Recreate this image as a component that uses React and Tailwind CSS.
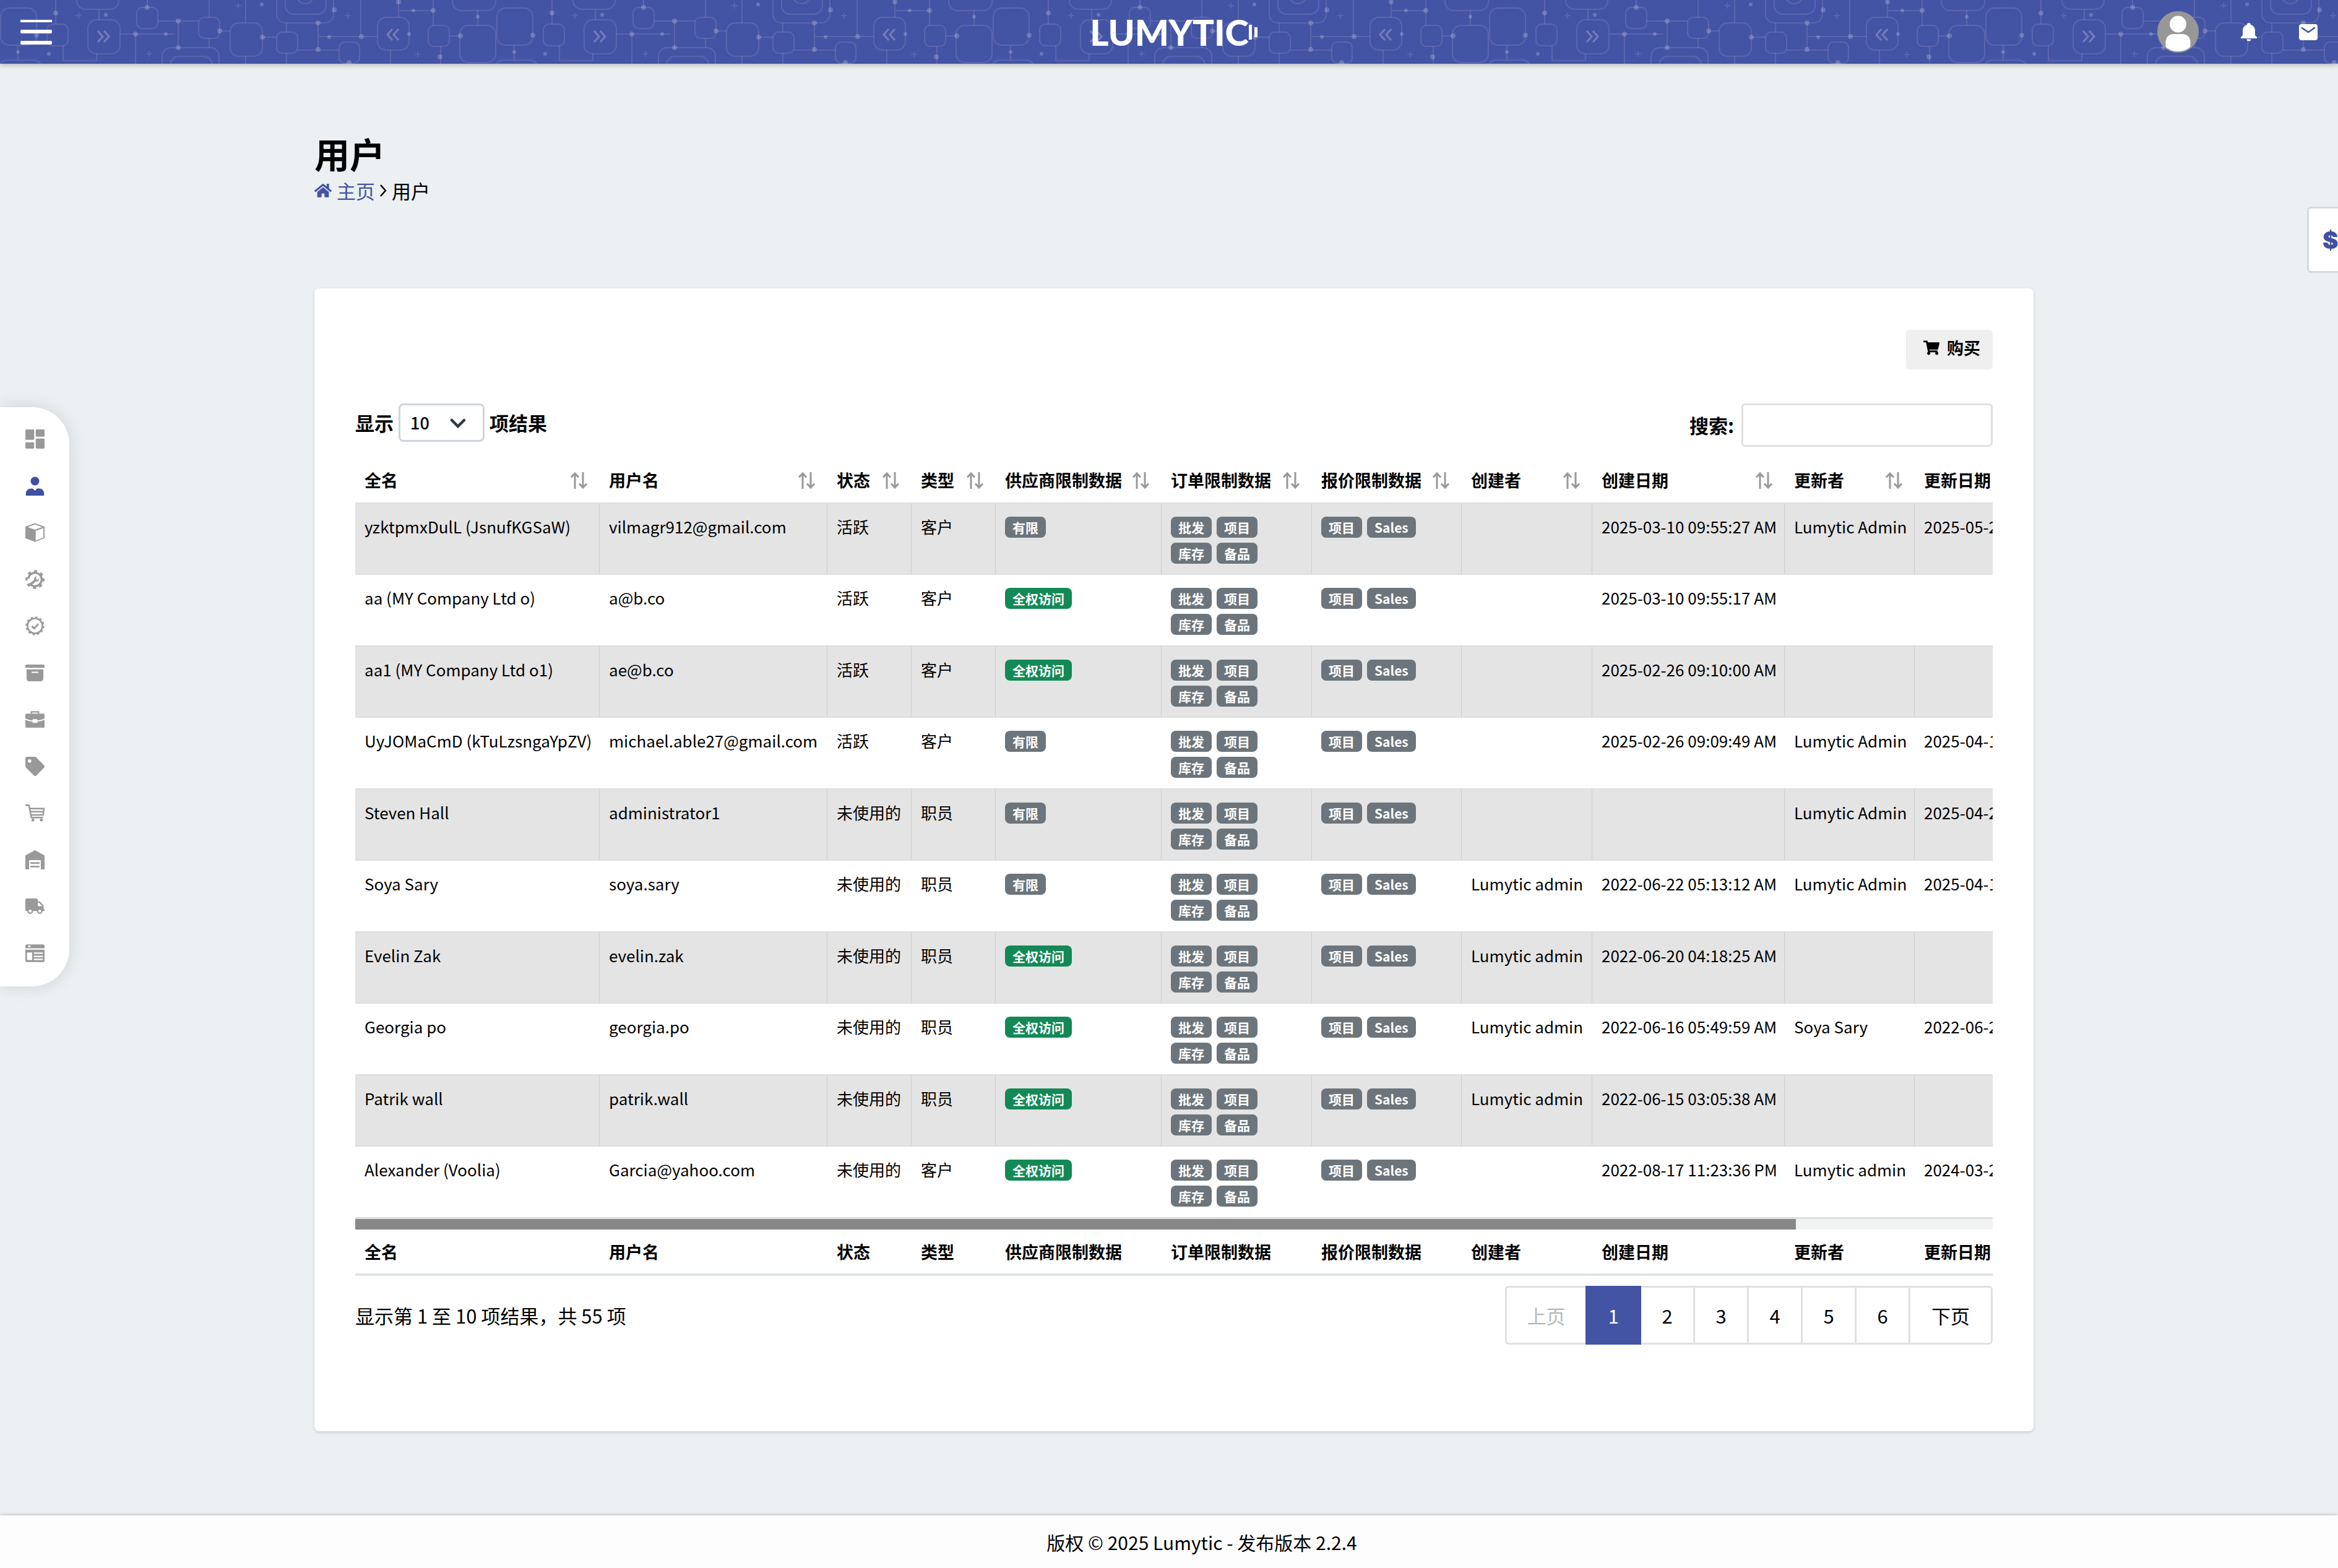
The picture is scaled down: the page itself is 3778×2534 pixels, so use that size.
import React from "react";
import { FaHome, FaShoppingCart, FaTag, FaTruck } from "react-icons/fa";
import { BsArchiveFill } from "react-icons/bs";
import { MdNotifications } from "react-icons/md";

const columns = [
  { title: "全名", width: 395 },
  { title: "用户名", width: 368 },
  { title: "状态", width: 136 },
  { title: "类型", width: 136 },
  { title: "供应商限制数据", width: 268 },
  { title: "订单限制数据", width: 243 },
  { title: "报价限制数据", width: 242 },
  { title: "创建者", width: 211 },
  { title: "创建日期", width: 311 },
  { title: "更新者", width: 210 },
  { title: "更新日期", width: 490 },
];

const users = [
  ["yzktpmxDulL (JsnufKGSaW)", "vilmagr912@gmail.com", "活跃", "客户", "有限", "", "2025-03-10 09:55:27 AM", "Lumytic Admin", "2025-05-2"],
  ["aa (MY Company Ltd o)", "a@b.co", "活跃", "客户", "全权访问", "", "2025-03-10 09:55:17 AM", "", ""],
  ["aa1 (MY Company Ltd o1)", "ae@b.co", "活跃", "客户", "全权访问", "", "2025-02-26 09:10:00 AM", "", ""],
  ["UyJOMaCmD (kTuLzsngaYpZV)", "michael.able27@gmail.com", "活跃", "客户", "有限", "", "2025-02-26 09:09:49 AM", "Lumytic Admin", "2025-04-1"],
  ["Steven Hall", "administrator1", "未使用的", "职员", "有限", "", "", "Lumytic Admin", "2025-04-2"],
  ["Soya Sary", "soya.sary", "未使用的", "职员", "有限", "Lumytic admin", "2022-06-22 05:13:12 AM", "Lumytic Admin", "2025-04-1"],
  ["Evelin Zak", "evelin.zak", "未使用的", "职员", "全权访问", "Lumytic admin", "2022-06-20 04:18:25 AM", "", ""],
  ["Georgia po", "georgia.po", "未使用的", "职员", "全权访问", "Lumytic admin", "2022-06-16 05:49:59 AM", "Soya Sary", "2022-06-2"],
  ["Patrik wall", "patrik.wall", "未使用的", "职员", "全权访问", "Lumytic admin", "2022-06-15 03:05:38 AM", "", ""],
  ["Alexander (Voolia)", "Garcia@yahoo.com", "未使用的", "客户", "全权访问", "", "2022-08-17 11:23:36 PM", "Lumytic admin", "2024-03-2"],
];

const Svg = ({ children }) => (
  <svg viewBox="0 0 24 24" className="size-[31px]" fill="currentColor" aria-hidden="true">
    {children}
  </svg>
);

const DashboardIcon = () => (
  <Svg>
    <rect x="0" y="0" width="11" height="13" rx="1" />
    <rect x="0" y="16" width="11" height="8" rx="1" />
    <rect x="13" y="0" width="11" height="9" rx="1" />
    <rect x="13" y="11.5" width="11" height="12.5" rx="1" />
  </Svg>
);

const UserIcon = () => (
  <Svg>
    <circle cx="12" cy="5.8" r="5.4" />
    <path d="M.6 24v-2.6c0-4 2.8-6.4 7-6.4 1.3 0 1.9.2 2.5.8L12 17.900l1.9-2.1c.6-.6 1.2-.8 2.5-.8 4.2 0 7 2.4 7 6.4V24z" />
  </Svg>
);

const BoxIcon = () => (
  <Svg>
    <path d="M12 .3 24 4.6v14.5L12 23.800 0 19.100V4.600zM12 2.100 3 5.300l9 3.200 9-3.200zM12.900 10v12l9.600-3.700V6.600z" fillRule="evenodd" />
  </Svg>
);

const ServiceIcon = () => (
  <Svg>
    <circle cx="12" cy="12" r="8.4" fill="none" stroke="currentColor" strokeWidth="2.6" strokeDasharray="43 6" transform="rotate(-150 12 12)" />
    <circle cx="12" cy="12" r="10.6" fill="none" stroke="currentColor" strokeWidth="2.6" strokeDasharray="4 4.325" transform="rotate(-8 12 12)" />
    <path d="M4.5 17.800 11 12.400c-.6-2.300 1-4.400 3.600-4.200l-1.700 2 .6 1.700 1.900.4 1.800-1.800c.5 2.500-1.500 4.600-4.200 4L6.700 20.200z" />
  </Svg>
);

const VerifiedIcon = () => (
  <Svg>
    <circle cx="12" cy="12" r="9.3" fill="none" stroke="currentColor" strokeWidth="2" />
    <circle cx="12" cy="12" r="10.900" fill="none" stroke="currentColor" strokeWidth="1.8" strokeDasharray="2.8 2.907" />
    <path d="m8 12.300 3 2.900 5.300-5.700" fill="none" stroke="currentColor" strokeWidth="2.200" />
  </Svg>
);

const BriefcaseIcon = () => (
  <Svg>
    <path d="M7.5 5V2.600h9V5" fill="none" stroke="currentColor" strokeWidth="1.8" />
    <path d="M1.5 4.800h21A1.500 1.500 0 0 1 24 6.300v4.500c-2.800 1.400-5.800 2.200-9 2.500v-1.500H9v1.500c-3.200-.3-6.200-1.100-9-2.500V6.300a1.500 1.500 0 0 1 1.500-1.500z" />
    <path d="M0 12.600c2.800 1.300 5.800 2 9 2.200v1.700h6v-1.700c3.200-.2 6.200-.9 9-2.200v8.400a1.500 1.500 0 0 1-1.500 1.500h-21A1.500 1.500 0 0 1 0 21z" />
  </Svg>
);

const CartIcon = () => (
  <Svg>
    <path d="M0 2.500h4.500l3 15.500H22M5.500 6.700h17.700l-1 8H7.200M6.300 10.700h16.300" fill="none" stroke="currentColor" strokeWidth="1.9" />
    <circle cx="9.500" cy="21" r="1.8" />
    <circle cx="20" cy="21" r="1.8" />
  </Svg>
);

const WarehouseIcon = () => (
  <Svg>
    <path d="M12 0 24 6.500V24h-4.700V12.300H4.700V24H0V6.500z" />
    <rect x="6.200" y="15" width="11.600" height="2" />
    <rect x="6.200" y="19.500" width="11.600" height="2" />
  </Svg>
);

const WindowIcon = () => (
  <Svg>
    <path d="M2 1h20a2 2 0 0 1 2 2v2.800H0V3a2 2 0 0 1 2-2zm1.500 1.400v1.800h3V2.400z" fillRule="evenodd" />
    <path d="M0 7.500h24V21a2 2 0 0 1-2 2H2a2 2 0 0 1-2-2zM2 11v9.500h6.500V11zm8.500 0v1.800H22V11zm0 4v1.800H22V15zm0 3.800v1.800H22v-1.800z" fillRule="evenodd" />
  </Svg>
);

const menu = [
  { label: "Dashboard", icon: <DashboardIcon /> },
  { label: "Users", icon: <UserIcon />, active: true },
  { label: "Products", icon: <BoxIcon /> },
  { label: "Services", icon: <ServiceIcon /> },
  { label: "Approvals", icon: <VerifiedIcon /> },
  { label: "Archive", icon: <BsArchiveFill size={31} /> },
  { label: "Projects", icon: <BriefcaseIcon /> },
  { label: "Prices", icon: <FaTag size={31} /> },
  { label: "Orders", icon: <CartIcon /> },
  { label: "Warehouse", icon: <WarehouseIcon /> },
  { label: "Shipping", icon: <FaTruck size={31} /> },
  { label: "Pages", icon: <WindowIcon /> },
];

// circuit board lines, repeated every 802px
const HeaderPattern = () => (
  <svg className="absolute inset-0 w-full h-full" aria-hidden="true">
    <defs>
      <pattern id="circuit" width="802" height="110" patternUnits="userSpaceOnUse">
        <g fill="none" stroke="#f3d9ee" strokeOpacity="0.13" strokeWidth="2">
          <rect x="1" y="13" width="58" height="60" rx="14" />
          <rect x="76" y="39" width="34" height="35" rx="9" />
          <rect x="124" y="-30" width="68" height="45" rx="14" />
          <rect x="142" y="32" width="52" height="55" rx="14" />
          <rect x="221" y="12" width="34" height="34" rx="9" />
          <rect x="321" y="28" width="34" height="34" rx="9" />
          <rect x="372" y="37" width="52" height="54" rx="14" />
          <rect x="262" y="77" width="92" height="60" rx="14" />
          <rect x="275" y="91" width="68" height="60" rx="14" />
          <rect x="-2" y="97" width="70" height="50" rx="14" />
          <rect x="447" y="-40" width="92" height="77" rx="14" />
          <rect x="461" y="-40" width="66" height="63" rx="14" />
          <circle cx="493" cy="-8" r="14" />
          <rect x="447" y="52" width="34" height="34" rx="9" />
          <rect x="548" y="68" width="33" height="34" rx="9" />
          <rect x="610" y="28" width="51" height="53" rx="14" />
          <rect x="692" y="41" width="34" height="34" rx="9" />
          <rect x="743" y="41" width="58" height="60" rx="14" />
          <rect x="731" y="-40" width="70" height="57" rx="14" />
          <path d="M90 0v39M29 73v24M160 15v17M102 74v24h54V87M194 55h88M219 55v50M238 0v12M255 34h66M288 34v44M338 0v28M338 62v15M355 50h17M397 0v37M397 91v15M424 60h23M463 37v15M463 86v20M514 37v43M481 81h67M514 59h96M583 0v59M644 0v28M644 17h56M700 0v41M631 81v25M726 58h17M712 75v30M772 17v24" />
        </g>
        <g fill="#fff" fillOpacity="0.2">
          <circle cx="90" cy="21" r="4" />
          <circle cx="59" cy="57" r="4" />
          <circle cx="79" cy="87" r="3" />
          <circle cx="29" cy="84" r="3" />
          <circle cx="171" cy="24" r="3" />
          <circle cx="219" cy="55" r="4" />
          <circle cx="268" cy="55" r="3" />
          <circle cx="238" cy="12" r="4" />
          <circle cx="288" cy="34" r="4" />
          <circle cx="288" cy="77" r="4" />
          <circle cx="355" cy="50" r="4" />
          <circle cx="424" cy="60" r="4" />
          <circle cx="423" cy="7" r="3" />
          <circle cx="514" cy="37" r="4" />
          <circle cx="514" cy="80" r="4" />
          <circle cx="540" cy="16" r="4" />
          <circle cx="532" cy="60" r="3" />
          <circle cx="584" cy="59" r="4" />
          <circle cx="564" cy="101" r="4" />
          <circle cx="644" cy="3" r="4" />
          <circle cx="668" cy="17" r="3" />
          <circle cx="700" cy="17" r="4" />
          <circle cx="661" cy="55" r="3" />
          <circle cx="744" cy="58" r="4" />
          <circle cx="711" cy="92" r="4" />
          <circle cx="772" cy="27" r="3" />
        </g>
        <g fill="none" stroke="#fff" strokeOpacity="0.24" strokeWidth="3">
          <path d="m158 50 8 9-8 9M168 50l8 9-8 9" />
          <path d="m634 47-8 9 8 9M644 47l-8 9 8 9" />
        </g>
        <g fill="none" stroke="#fff" strokeOpacity="0.1" strokeWidth="2">
          <path d="M122 25h10M127 20v10M236 87h10M241 82v10M380 9h10M385 4v10M557 25h10M562 20v10M670 88h10M675 83v10" />
        </g>
      </pattern>
    </defs>
    <rect width="100%" height="100%" fill="url(#circuit)" />
  </svg>
);

const Header = () => (
  <header className="relative z-20 bg-[#4454a4] shadow-[0_2px_8px_rgba(0,0,0,0.25)]">
    <HeaderPattern />
    <div className="relative grid grid-cols-3 items-center h-[103px] px-[33px] text-white">
      <button aria-label="Menu" className="flex flex-col justify-self-start w-[51px] gap-3 cursor-pointer">
        <span className="h-1 bg-white" />
        <span className="h-1.5 rounded-xs bg-white" />
        <span className="h-1.5 rounded-xs bg-white" />
      </button>
      <a href="#" className="flex items-center justify-self-center pl-4 font-[Lato,sans-serif] font-black text-[58px] leading-none">
        LUMYTIC
        <svg width="15" height="26" viewBox="0 0 15 26" fill="currentColor" aria-hidden="true">
          <rect x="0" y="1" width="5" height="24" />
          <rect x="9" y="5" width="5" height="16" />
        </svg>
      </a>
      <div className="flex items-center justify-self-end gap-[68px]">
        <button aria-label="Profile" className="cursor-pointer">
          <svg width="67" height="67" viewBox="0 0 67 67" aria-hidden="true">
            <clipPath id="avatar">
              <circle cx="33.5" cy="33.5" r="33" />
            </clipPath>
            <g clipPath="url(#avatar)">
              <rect width="67" height="67" fill="#979797" />
              <circle cx="33.5" cy="21" r="13.5" fill="#fff" />
              <path d="M13.5 67V51c0-9 5-14 13-14h14c8 0 13 5 13 14v16z" fill="#fff" />
            </g>
            <circle cx="33.5" cy="33.5" r="32.5" fill="none" stroke="#979797" strokeWidth="2" />
          </svg>
        </button>
        <button aria-label="Notifications" className="cursor-pointer">
          <svg width="26" height="30" viewBox="0 0 26 30" fill="#fff" aria-hidden="true">
            <path d="M13 0c1.800 0 3 1.200 3 3 4.300 1.200 7 4.700 7 9.500v7.500l3 3v2H0v-2l3-3v-7.500C3 7.700 5.700 4.200 10 3c0-1.800 1.200-3 3-3zM9.500 26.500h7c0 2-1.500 3-3.500 3s-3.500-1-3.500-3z" />
          </svg>
        </button>
        <button aria-label="Messages" className="cursor-pointer">
          <svg width="30" height="26" viewBox="0 0 30 26" aria-hidden="true">
            <rect width="30" height="26" rx="4" fill="#fff" />
            <path d="m4 5.500 11 7.500 11-7.500" fill="none" stroke="#4454a4" strokeWidth="2.600" />
          </svg>
        </button>
      </div>
    </div>
  </header>
);

const Sidebar = () => (
  <nav className="absolute left-0 top-[658px] z-10 w-[112px] h-[936px] rounded-r-[60px] bg-white shadow-[0_0_28px_rgba(0,0,0,0.12)]">
    <ul className="flex flex-col justify-between items-center h-full pt-[36px] pb-[38px]">
      {menu.map((item) => (
        <li key={item.label}>
          <a href="#" aria-label={item.label} className={`block ${item.active ? "text-[#3f4fa3]" : "text-[#999]"}`}>
            {item.icon}
          </a>
        </li>
      ))}
    </ul>
  </nav>
);

const Badge = ({ children, green }) => (
  <span
    className={`inline-flex items-center h-[34px] px-3 rounded-[8px] text-[21px] leading-none font-bold text-white ${
      green ? "bg-[#138a56]" : "bg-[#6c757b]"
    }`}
  >
    {children}
  </span>
);

const SortIcon = () => (
  <svg width="27" height="27" viewBox="0 0 27 27" fill="none" stroke="#999" strokeWidth="3" className="shrink-0" aria-hidden="true">
    <path d="M7 27V2M1 8.500 7 2l6 6.500M20 0v25M14 18.500l6 6.500 6-6.500" />
  </svg>
);

const Cols = () => (
  <colgroup>
    {columns.map((col) => (
      <col key={col.title} style={{ width: col.width }} />
    ))}
  </colgroup>
);

const UsersTable = () => (
  <div className="mt-[18px]">
    <div className="overflow-hidden">
      <table className="table-fixed w-[3010px] border-separate border-spacing-0 text-[26px] leading-[40px] whitespace-nowrap">
        <Cols />
        <thead>
          <tr>
            {columns.map((col) => (
              <th key={col.title} className="h-[72px] pl-[15px] pr-5 text-left font-bold text-[27px]">
                <button className="flex w-full items-center justify-between cursor-pointer">
                  {col.title}
                  <SortIcon />
                </button>
              </th>
            ))}
          </tr>
        </thead>
        <tbody>
          {users.map(([name, login, status, type, vendor, creator, created, updater, updated]) => (
            <tr
              key={login}
              className="align-top *:px-[15px] *:pt-[17px] odd:*:h-[117px] even:*:h-[114px] odd:*:bg-[#e4e4e4] odd:*:border-y-2 odd:*:border-y-[#dddfe1] odd:*:border-r odd:*:border-r-[#cfcfcf]"
            >
              <td>{name}</td>
              <td>{login}</td>
              <td>{status}</td>
              <td>{type}</td>
              <td>
                <div className="flex pt-1">
                  <Badge green={vendor === "全权访问"}>{vendor}</Badge>
                </div>
              </td>
              <td>
                <div className="flex flex-wrap gap-2 w-[160px] pt-1">
                  <Badge>批发</Badge>
                  <Badge>项目</Badge>
                  <Badge>库存</Badge>
                  <Badge>备品</Badge>
                </div>
              </td>
              <td>
                <div className="flex gap-2 pt-1">
                  <Badge>项目</Badge>
                  <Badge>Sales</Badge>
                </div>
              </td>
              <td>{creator}</td>
              <td>{created}</td>
              <td>{updater}</td>
              <td>{updated}</td>
            </tr>
          ))}
        </tbody>
      </table>
    </div>

    {/* horizontal scrollbar */}
    <div className="h-5 border-t-3 border-[#dedede] bg-[#f1f3f3]">
      <div className="h-full w-[88%] bg-[#878787]" />
    </div>

    <div className="overflow-hidden border-b-4 border-[#dfe4e6]">
      <table className="table-fixed w-[3010px] text-[27px] leading-[40px] whitespace-nowrap">
        <Cols />
        <tfoot>
          <tr>
            {columns.map((col) => (
              <th key={col.title} className="h-[71px] px-[15px] text-left font-bold">
                {col.title}
              </th>
            ))}
          </tr>
        </tfoot>
      </table>
    </div>
  </div>
);

const Pagination = () => (
  <nav className="flex h-[95px] rounded-md border-3 border-[#e0e0e0] *:cursor-pointer">
    <button disabled className="w-[127px] text-[#b8b8b8]">
      上页
    </button>
    <button className="w-[90px] -my-[3px] bg-[#4454a4] text-white">1</button>
    {[2, 3, 4, 5, 6].map((page) => (
      <button key={page} className="w-[87px] border-r-3 border-[#e0e0e0]">
        {page}
      </button>
    ))}
    <button className="w-[130px]">下页</button>
  </nav>
);

const App = () => {
  return (
    <div className="relative flex flex-col min-h-screen overflow-hidden bg-[#ecf0f3] text-black text-[31px] leading-[46px] font-['Noto_Sans_CJK_SC',sans-serif]">
      <Header />
      <Sidebar />

      <button
        aria-label="Currency"
        className="absolute right-[-60px] top-[334px] w-[110px] h-[107px] pl-[22px] text-left rounded-md border-3 border-[#d8d9da] bg-white text-[#3f4fa3] text-[38px] font-black font-[Inter,sans-serif]"
      >
        $
      </button>

      <main className="grow pl-[508px] pr-[492px] pt-[108px]">
        <h1 className="text-[57px] leading-[72px] font-bold">用户</h1>
        <div className="flex items-center gap-2 mt-0.5">
          <a href="#" className="flex items-center gap-2 text-[#4454a4]">
            <FaHome size={28} />
            主页
          </a>
          <svg width="11" height="20" viewBox="0 0 11 20" fill="none" stroke="#000" strokeWidth="2.500" aria-hidden="true">
            <path d="m1 1 8 9-8 9" />
          </svg>
          用户
        </div>

        <section className="mt-[135px] px-[66px] pt-[67px] pb-[140px] rounded-lg bg-white shadow-[0_2px_5px_rgba(0,0,0,0.15)]">
          <div className="flex justify-end">
            <button className="flex items-center gap-3 h-16 pl-7 pr-5 pb-1.5 rounded-md bg-[#efefef] text-[27px] font-bold cursor-pointer">
              <FaShoppingCart size={26} />
              购买
            </button>
          </div>

          <div className="flex items-start justify-between mt-[55px] font-bold">
            <label className="flex items-center gap-2">
              显示
              <span className="relative">
                <select className="block appearance-none w-[139px] h-[62px] pl-4 rounded-lg border-3 border-[#cfd5dc] bg-white text-[27px] font-medium">
                  <option>10</option>
                  <option>25</option>
                  <option>50</option>
                </select>
                <svg width="26" height="16" viewBox="0 0 26 16" fill="none" stroke="#343a40" strokeWidth="4.500" strokeLinecap="round" className="absolute right-[30px] top-6 pointer-events-none" aria-hidden="true">
                  <path d="m3 3 10 10L23 3" />
                </svg>
              </span>
              项结果
            </label>
            <label className="flex items-center gap-3">
              搜索:
              <input type="search" className="w-[406px] h-[70px] px-4 rounded-md border-3 border-[#e0e0e0] bg-white" />
            </label>
          </div>

          <UsersTable />

          <div className="flex items-center justify-between mt-4">
            <p>显示第 1 至 10 项结果，共 55 项</p>
            <Pagination />
          </div>
        </section>
      </main>

      <footer className="mt-[136px] pl-[106px] h-[85px] flex items-center justify-center bg-[#fdfdfd] text-[30px] shadow-[0_-1px_5px_rgba(0,0,0,0.2)]">
        版权 © 2025 Lumytic - 发布版本 2.2.4
      </footer>
    </div>
  );
};

export default App;
